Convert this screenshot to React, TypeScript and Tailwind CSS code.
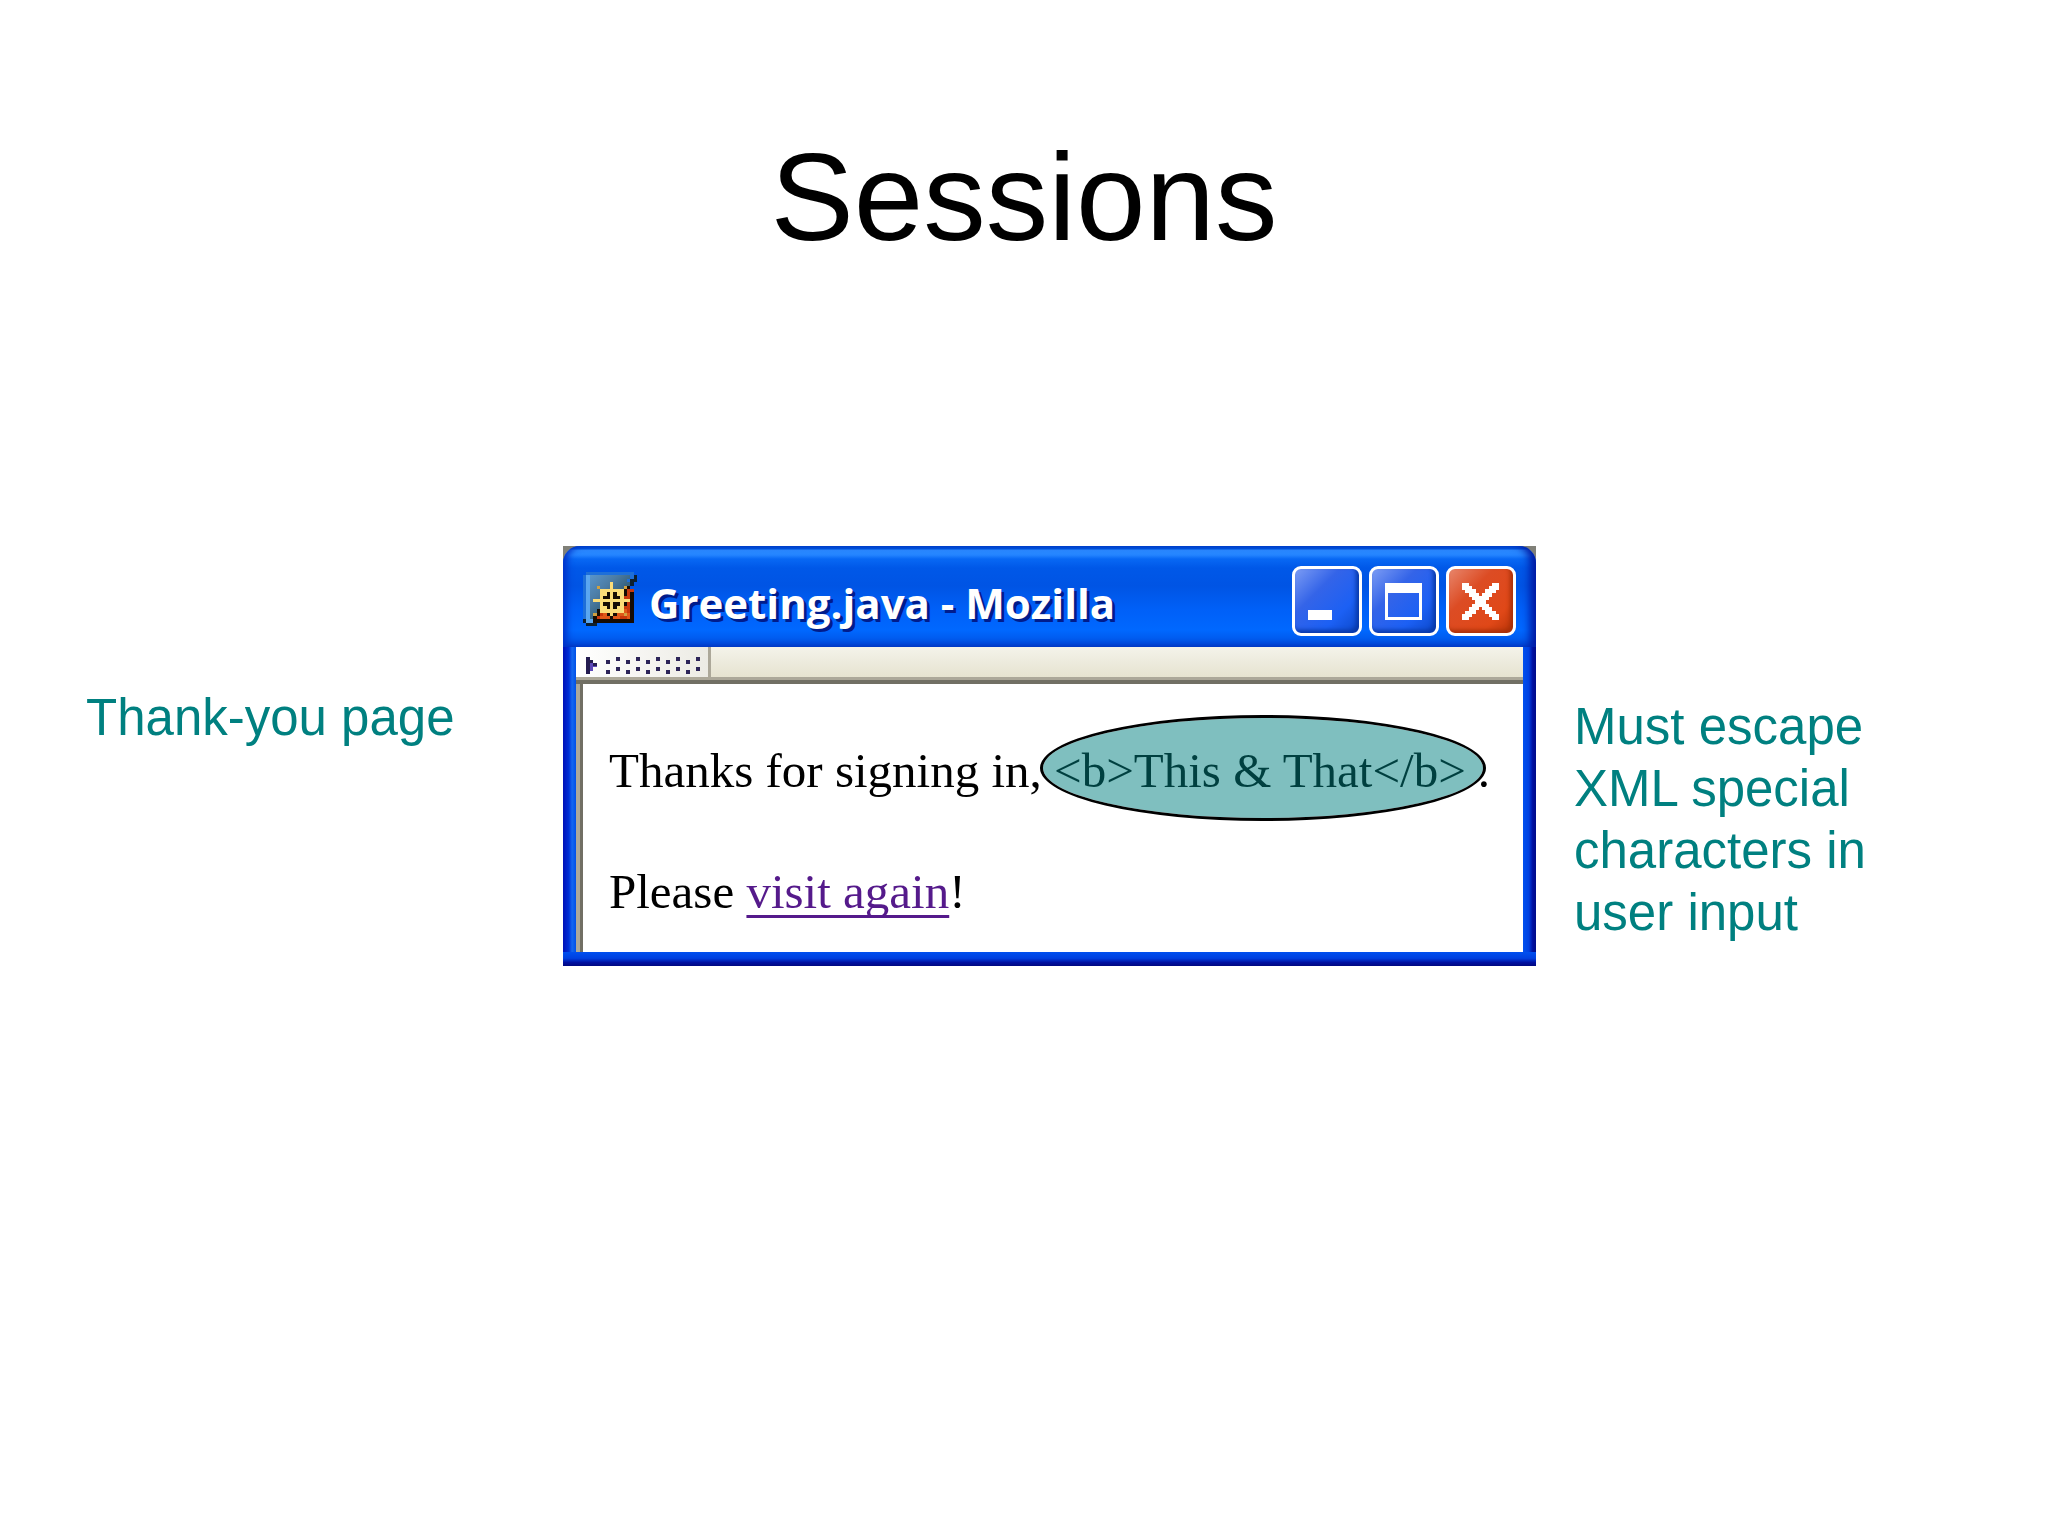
import React from "react"

const gripDots = Array.from({ length: 10 }, (_, i) => i)

const iconColors: Record<string, string> = {
  b: "#1e6fd8",
  l: "#5aa6f0",
  n: "#0d2030",
  y: "#fbdc78",
  o: "#d0a040",
  k: "#160c04",
  r: "#c8380c",
  s: "#e05818",
}

// 16x16 pixel art, "." leaves the tile gradient visible
const iconRows = [
  " bbbbbbbbbbbbbb ",
  "bl............bn",
  "bl...........bnn",
  "bl......y.....n ",
  "bl..o...y...ok  ",
  "bl...yyyyyyykrr ",
  "bl...yykykyykrk ",
  "bl...ykkykkyrrk ",
  "bl.yyyyyyyyyyyk ",
  "bl...ykkykkykrk ",
  "bl...yykykyyrrk ",
  "bl..kyyyyyyysrk ",
  "bl.okrskykssosk ",
  "bl.krssskssrrsk ",
  "nllkkkkkkkkkkkk ",
  " nnn            ",
]

const MozillaIcon = () => (
  <svg className="size-[54px] shrink-0" viewBox="0 0 16 16" shapeRendering="crispEdges">
    <defs>
      <linearGradient id="tile" x1="0" y1="0" x2="1" y2="1">
        <stop offset="0" stopColor="#5a98d0" />
        <stop offset="0.35" stopColor="#4c7ca4" />
        <stop offset="0.6" stopColor="#34607c" />
        <stop offset="1" stopColor="#1d3848" />
      </linearGradient>
    </defs>
    <path fill="url(#tile)" d="M1 1h13v13H1z" />
    {iconRows.map((row, y) =>
      row
        .split("")
        .map((c, x) =>
          iconColors[c] ? (
            <rect key={`${x}-${y}`} x={x} y={y} width="1" height="1" fill={iconColors[c]} />
          ) : null,
        ),
    )}
  </svg>
)

interface TitleButtonProps {
  label: string
  close?: boolean
  children: React.ReactNode
}

const TitleButton: React.FC<TitleButtonProps> = ({ label, close, children }) => (
  <button
    aria-label={label}
    className={`size-[70px] rounded-[9px] border-[3px] border-white ${
      close
        ? "bg-[linear-gradient(135deg,#e8866c_0%,#dc4c24_35%,#e04818_75%,#b83408_100%)] shadow-[inset_-3px_-3px_4px_#a83008]"
        : "bg-[linear-gradient(135deg,#7c9cf4_0%,#3464e8_35%,#1c60f4_70%,#0c48c8_100%)] shadow-[inset_-3px_-3px_4px_#0838a8]"
    }`}
  >
    <svg className="size-full" viewBox="0 0 64 64" shapeRendering="crispEdges">
      {children}
    </svg>
  </button>
)

const BrowserWindow = () => (
  <section className="bg-[linear-gradient(#808078_30px,#0030d0_30px)]">
    <header className="flex h-[101px] items-center gap-2 rounded-t-[17px] bg-[linear-gradient(#0050d8_0px,#0058e0_3px,#2c8cff_4px,#2484ff_9px,#0868f4_13px,#0058e8_22px,#0054e4_40px,#0060f8_64px,#0068ff_84px,#005cf0_92px,#0044d0_101px)] pr-5 pl-5 shadow-[inset_7px_0_7px_-3px_#0030c8,inset_-9px_0_8px_-3px_#0018a0]">
      <div className="pt-1">
        <MozillaIcon />
      </div>
      <h2 className="ml-1 flex-1 pt-3 font-['Open_Sans',sans-serif] text-[42px] leading-[56px] font-bold whitespace-nowrap text-white [text-shadow:3px_3px_0_#001c8c]">
        Greeting.java - Mozilla
      </h2>
      <div className="flex gap-[7px] pt-2">
        <TitleButton label="Minimize">
          <path fill="#fff" d="M13 41h24v10H13z" />
        </TitleButton>
        <TitleButton label="Maximize">
          <path fill="#fff" fillRule="evenodd" d="M13 14h37v37H13zM16 24v24h31V24z" />
        </TitleButton>
        <TitleButton label="Close" close>
          <path
            fill="#fff"
            d="M13 14h7v3h3v3h4v4h3v3h3v-3h3v-4h4v-3h3v-3h7v7h-3v3h-4v4h-3v3h-3v4h3v3h3v4h4v3h3v6h-7v-3h-3v-3h-4v-4h-3v-3h-3v3h-3v4h-4v3h-3v3h-7v-6h3v-3h4v-4h3v-3h3v-4h-3v-3h-3v-4h-4v-3h-3z"
          />
        </TitleButton>
      </div>
    </header>

    <div className="flex">
      <div className="w-[13px] bg-[linear-gradient(90deg,#0010b8,#0030d8_45%,#1468f0_70%,#0050e8)]" />
      <div className="min-w-0 flex-1 bg-white">
        <div className="flex h-[37px] border-b-4 border-[#716f64] bg-[linear-gradient(#f4f3ea,#e6e3d0_30px,#aca899_30px)]">
          <button
            aria-label="Collapse toolbar"
            className="mb-[3px] w-[135px] border-r-[3px] border-[#aca899] bg-[linear-gradient(90deg,#ffffff,#ecebe4)]"
          >
            <svg className="h-[30px] w-[132px]" viewBox="0 0 132 30" shapeRendering="crispEdges">
              <path fill="#241c50" d="M10 10h4v17h-4z" />
              <path fill="#5c48b8" d="M14 13h3v3h4v4h-4v4h-3z" />
              <path fill="#241c50" d="M14 13h3v3h-3zM17 16h4v3h-4z" />
              {gripDots.map((i) => (
                <g key={i} fill="#2c2458">
                  <rect x={30 + i * 10} y={i % 2 ? 10 : 13} width="4" height="4" />
                  <rect x={30 + i * 10} y={i % 2 ? 20 : 23} width="4" height="4" />
                </g>
              ))}
            </svg>
          </button>
        </div>
        <div className="flex flex-col gap-[61px] border-l-4 border-[#aca899] pt-[57px] pb-[30px] pl-[29px] font-['Liberation_Serif',serif] text-[49px] leading-[60px] text-black shadow-[inset_3px_0_0_#716f64]">
          <p className="whitespace-nowrap">
            Thanks for signing in,{" "}
            <span className="relative inline-block pr-3">
              &lt;b&gt;This &amp; That&lt;/b&gt;
              <span className="absolute -top-[26px] -right-2 -bottom-[20px] -left-[14px] rounded-[50%] border-3 border-black bg-[#008080]/50 bg-clip-padding" />
            </span>
            .
          </p>
          <p>
            Please{" "}
            <a
              href="#"
              className="text-[#551a8b] underline decoration-3 underline-offset-[7px] [text-decoration-skip-ink:none]"
            >
              visit again
            </a>
            !
          </p>
        </div>
      </div>
      <div className="w-[13px] bg-[linear-gradient(90deg,#0050f0,#0040e0_45%,#0010a0_75%,#000c88)]" />
    </div>
    <div className="h-[14px] bg-[linear-gradient(#0050f0,#0040e0_45%,#0010a0_75%,#000880)]" />
  </section>
)

const App = () => (
  <main className="min-h-screen bg-white pt-[125px] font-['Liberation_Sans',sans-serif]">
    <h1 className="text-center text-[125px] leading-[144px] text-black">Sessions</h1>
    <div className="mt-[277px] grid grid-cols-[563fr_973fr_512fr] items-start text-[51px] leading-[62px] text-[#008080]">
      <p className="pt-[141px] pl-[86px]">Thank-you page</p>
      <BrowserWindow />
      <p className="max-w-[350px] pt-[150px] pl-[38px]">
        Must escape XML special characters in user input
      </p>
    </div>
  </main>
)

export default App
